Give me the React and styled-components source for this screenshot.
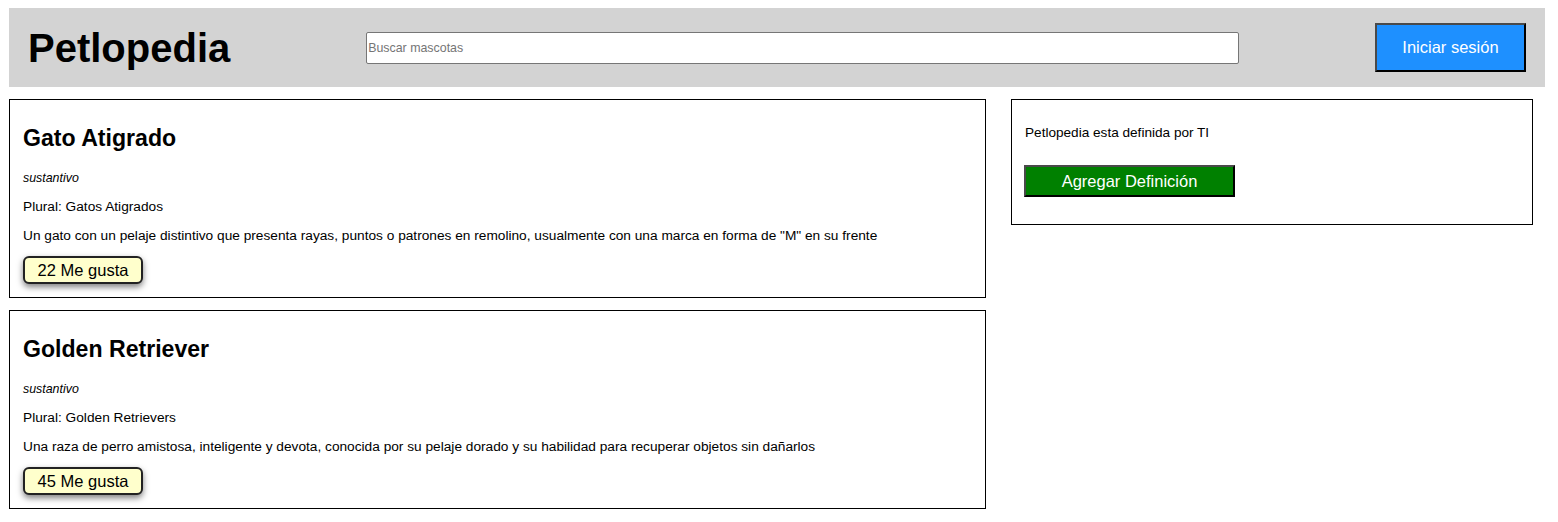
import React from "react";
import styled, { createGlobalStyle } from "styled-components";

const GlobalStyle = createGlobalStyle`
  html, body { margin: 0; padding: 0; background: #fff; }
  body { font-family: "Liberation Sans", Arial, sans-serif; color: #000; }
`;

const Page = styled.div`
  padding: 8px 13px 0 9px;
  display: flex;
  flex-direction: column;
  gap: 12px;
`;

const Header = styled.header`
  height: 79px;
  width: 1536px;
  box-sizing: border-box;
  background: #d3d3d3;
  display: flex;
  align-items: center;
  justify-content: space-between;
  padding: 0 19px;
`;

const Logo = styled.h1`
  margin: 0;
  font-size: 40px;
  font-weight: bold;
  line-height: 46px;
`;

const Search = styled.input`
  width: 873px;
  height: 32px;
  box-sizing: border-box;
  border: 1px solid #767676;
  border-radius: 2px;
  padding: 1px 1px;
  font-family: "Liberation Sans", Arial, sans-serif;
  font-size: 12.4px;
  background: #fff;
  &::placeholder { color: #757575; }
`;

const ActionButton = styled.button`
  box-sizing: border-box;
  width: ${(p) => p.$w}px;
  height: ${(p) => p.$h}px;
  background: ${(p) => p.$bg};
  color: #fff;
  font-family: "Liberation Sans", Arial, sans-serif;
  font-size: 16.5px;
  border-style: solid;
  border-width: 2px;
  border-color: #4a4a4a #000 #000 #4a4a4a;
  padding: 0;
  cursor: pointer;
`;

const Main = styled.div`
  display: flex;
  align-items: flex-start;
  gap: 25px;
`;

const Column = styled.div`
  width: 977px;
  display: flex;
  flex-direction: column;
  gap: 12px;
`;

const Card = styled.article`
  box-sizing: border-box;
  border: 1px solid #000;
  padding: 0 13px 13px;
  display: flex;
  flex-direction: column;
  align-items: flex-start;
`;

const Title = styled.h2`
  margin: 25px 0 0;
  font-size: 23.1px;
  line-height: 27px;
  font-weight: bold;
`;

const Kind = styled.p`
  margin: 19px 0 0;
  font-size: 12.4px;
  line-height: 14px;
  font-style: italic;
`;

const Text = styled.p`
  margin: ${(p) => p.$mt}px 0 0;
  font-size: 13.7px;
  line-height: 16px;
`;

const LikeButton = styled.button`
  margin-top: 12px;
  box-sizing: border-box;
  width: 120px;
  height: 28px;
  background: #ffffcc;
  border: 2px solid #222;
  border-radius: 6px;
  box-shadow: 0 3px 6px rgba(0, 0, 0, 0.5);
  font-family: "Liberation Sans", Arial, sans-serif;
  font-size: 16.5px;
  color: #000;
  padding: 0;
  cursor: pointer;
`;

const Sidebar = styled.aside`
  box-sizing: border-box;
  width: 522px;
  border: 1px solid #000;
  padding: 25px 12px 27px;
  display: flex;
  flex-direction: column;
  align-items: flex-start;
`;

const SideText = styled.p`
  margin: 0 0 0 1px;
  font-size: 13.6px;
  line-height: 16px;
`;

const SideAction = styled.div`
  margin-top: 24px;
`;

const entries = [
  {
    title: "Gato Atigrado",
    plural: "Gatos Atigrados",
    text:
      'Un gato con un pelaje distintivo que presenta rayas, puntos o patrones en remolino, usualmente con una marca en forma de "M" en su frente',
    likes: 22,
  },
  {
    title: "Golden Retriever",
    plural: "Golden Retrievers",
    text:
      "Una raza de perro amistosa, inteligente y devota, conocida por su pelaje dorado y su habilidad para recuperar objetos sin dañarlos",
    likes: 45,
  },
];

export default function App() {
  return (
    <>
      <GlobalStyle />
      <Page>
        <Header>
          <Logo>Petlopedia</Logo>
          <Search type="text" placeholder="Buscar mascotas" />
          <ActionButton $w={151} $h={49} $bg="#1e90ff">
            Iniciar sesión
          </ActionButton>
        </Header>
        <Main>
          <Column>
            {entries.map((e) => (
              <Card key={e.title}>
                <Title>{e.title}</Title>
                <Kind>sustantivo</Kind>
                <Text $mt={14}>Plural: {e.plural}</Text>
                <Text $mt={13}>{e.text}</Text>
                <LikeButton>{e.likes} Me gusta</LikeButton>
              </Card>
            ))}
          </Column>
          <Sidebar>
            <SideText>Petlopedia esta definida por TI</SideText>
            <SideAction>
              <ActionButton $w={211} $h={32} $bg="#008000">
                Agregar Definición
              </ActionButton>
            </SideAction>
          </Sidebar>
        </Main>
      </Page>
    </>
  );
}
